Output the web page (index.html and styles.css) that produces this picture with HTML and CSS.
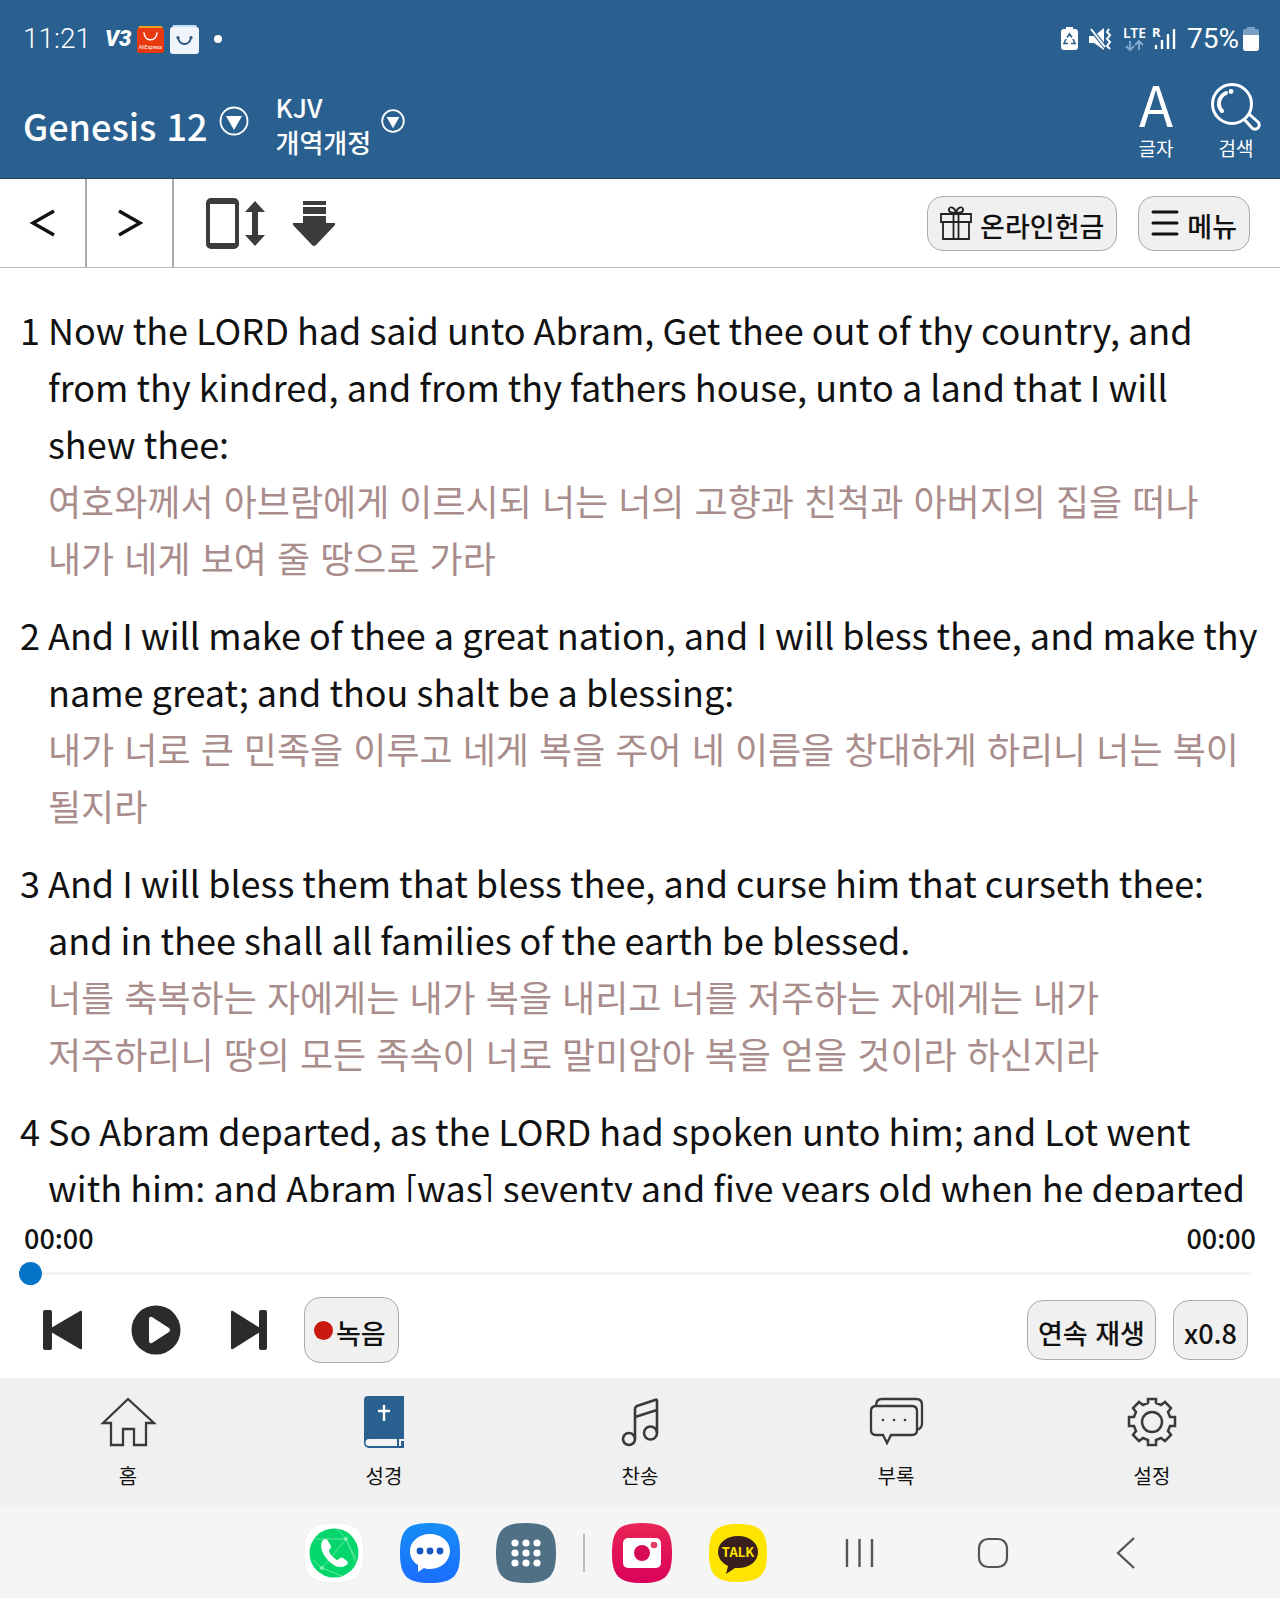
FILE: index.html
```html
<!DOCTYPE html>
<html lang="ko">
<head>
<meta charset="utf-8">
<meta name="viewport" content="width=device-width, initial-scale=1">
<title>Genesis 12</title>
<link rel="stylesheet" href="styles.css">
</head>
<body>
<div class="app">
  <header class="top">
    <div class="status">
      <div class="status-left">
        <span class="clock">11:21</span>
        <span class="v3">V3</span>
        <svg width="27" height="27" viewBox="0 0 27 27"><path d="M2 0h23l1 4H1z" fill="#f5a01c"/><rect y="2" width="27" height="25" rx="2" fill="#e8380d"/><path d="M7 7c1 9 12 9 13 0" fill="none" stroke="#fff" stroke-width="1.6" stroke-linecap="round"/><text x="13.500" y="22.500" font-size="5" text-anchor="middle" fill="#fff">AliExpress</text></svg>
        <svg width="29" height="29" viewBox="0 0 29 29"><path d="M3 0h23l2 5H1z" fill="#c4dcf5"/><rect y="2" width="29" height="27" rx="3" fill="#eff5fb"/><path d="M8 13c2 8 11 8 13 0" fill="none" stroke="#2a5580" stroke-width="1.800"/><circle cx="8" cy="12.500" r="1.600" fill="#2a5580"/><circle cx="21" cy="12.500" r="1.600" fill="#2a5580"/></svg>
        <span class="dot"></span>
      </div>
      <div class="status-right">
        <svg width="17" height="24" viewBox="0 0 17 24"><path d="M5 0h7v2h2a3 3 0 0 1 3 3v15a3 3 0 0 1-3 3H3a3 3 0 0 1-3-3V5a3 3 0 0 1 3-3h2z" fill="#fff"/><path d="M6 10.500l2.500-3.500 2.500 3.500M12 12l2 4.500h-4M7 16.500H3L5 12" fill="none" stroke="#2a6090" stroke-width="1.600"/></svg>
        <svg width="23" height="24" viewBox="0 0 23 24"><path d="M0 9h5l10-8v22L5 16H0z" fill="#fff"/><path d="M1 1l16 20" stroke="#2a6090" stroke-width="4"/><path d="M2 2l14 18" stroke="#fff" stroke-width="2"/><path d="M20 2l-2 3 3 3-3 4 3 3-3 4 3 3" fill="none" stroke="#fff" stroke-width="2"/></svg>
        <svg width="24" height="24" viewBox="0 0 24 24"><text x="0" y="11" font-size="14" font-weight="600" fill="#fff" class="net">LTE</text><path d="M7 14v9M3 19l4 4 4-4M16 23v-9M12 18l4-4 4 4" fill="none" stroke="#85abd0" stroke-width="1.800"/></svg>
        <svg class="signal" width="24" height="24" viewBox="0 0 24 24"><text x="0" y="10" font-size="13" font-weight="700" fill="#fff" class="net">R</text><path d="M4 18v4M10 13v9M16 7v15M22 2v20" stroke="#fff" stroke-width="2.400"/></svg>
        <span class="battery-text">75%</span>
        <svg width="16" height="24" viewBox="0 0 16 24"><path d="M4 0h8v2h2a2 2 0 0 1 2 2v17a3 3 0 0 1-3 3H3a3 3 0 0 1-3-3V4a2 2 0 0 1 2-2h2z" fill="#7aa0c4"/><path d="M0 8h16v13a3 3 0 0 1-3 3H3a3 3 0 0 1-3-3z" fill="#fff"/></svg>
      </div>
    </div>
    <div class="titlebar">
      <button class="book"><span>Genesis 12</span><svg width="30" height="30" viewBox="0 0 30 30"><circle cx="15" cy="15" r="13.500" fill="none" stroke="#fff" stroke-width="1.800"/><path d="M7 10h16l-8 14z" fill="#fff"/></svg></button>
      <button class="version"><span>KJV<br>개역개정</span><svg width="24" height="24" viewBox="0 0 30 30"><circle cx="15" cy="15" r="13.500" fill="none" stroke="#fff" stroke-width="2.200"/><path d="M7 10h16l-8 14z" fill="#fff"/></svg></button>
      <div class="tools">
        <button class="tool"><span class="tool-glyph">A</span><span>글자</span></button>
        <button class="tool"><svg width="50" height="48" viewBox="0 0 50 48"><g fill="none" stroke="#fff"><circle cx="21" cy="21" r="19.500" stroke-width="3"/><path d="M33 36l8 9a4 4 0 0 0 6-6l-9-8" stroke-width="3"/><path d="M15 10c-8 4-9 13-4 18" stroke-width="4" stroke-linecap="round"/></g><circle cx="20" cy="8.500" r="2.400" fill="#fff"/></svg><span>검색</span></button>
      </div>
    </div>
  </header>

  <nav class="toolbar">
    <button class="step" aria-label="이전 장"><svg width="24" height="28" viewBox="0 0 24 28"><path d="M23 2L2 14l21 12" fill="none" stroke="#111" stroke-width="3.400"/></svg></button>
    <button class="step" aria-label="다음 장"><svg width="24" height="28" viewBox="0 0 24 28"><path d="M1 2l21 12L1 26" fill="none" stroke="#111" stroke-width="3.400"/></svg></button>
    <button class="plain" aria-label="자동 스크롤"><svg width="59" height="51" viewBox="0 0 59 51"><path d="M5 0h23a5 5 0 0 1 5 5v41a5 5 0 0 1-5 5H5a5 5 0 0 1-5-5V5a5 5 0 0 1 5-5zM4 6v39h25V6z" fill="#3c3c3c" fill-rule="evenodd"/><path d="M49 3l10 11h-7v23h7L49 48 39 37h7V14h-7z" fill="#3c3c3c"/></svg></button>
    <button class="plain" aria-label="다운로드"><svg width="42" height="45" viewBox="0 0 42 45"><path d="M10 0h23v4H10zM10 6h23v7H10zM10 15h23v7h9v2L23 44q-2 2-4 0L0 24v-2h10z" fill="#3c3c3c"/></svg></button>
    <span class="spacer"></span>
    <button class="pill"><svg width="32" height="34" viewBox="0 0 32 34"><g fill="none" stroke="#222" stroke-width="1.800"><path d="M1 8h30v8H1zM3 16h26v17H3zM13.500 8v25M18.500 8v25M16 7c-4 0-8-1-7-4s6-2 7 4c1-6 6-7 7-4s-3 4-7 4z"/></g></svg><span>온라인헌금</span></button>
    <button class="pill"><svg width="28" height="26" viewBox="0 0 28 26"><path d="M2 2h24M2 13h24M2 24h24" stroke="#111" stroke-width="3" stroke-linecap="round"/></svg><span>메뉴</span></button>
  </nav>

  <main class="reader">
    <article class="verse"><span class="num">1</span><div><p lang="en">Now the LORD had said unto Abram, Get thee out of thy country, and from thy kindred, and from thy fathers house, unto a land that I will shew thee:</p><p class="ko">여호와께서 아브람에게 이르시되 너는 너의 고향과 친척과 아버지의 집을 떠나 내가 네게 보여 줄 땅으로 가라</p></div></article>
    <article class="verse"><span class="num">2</span><div><p lang="en">And I will make of thee a great nation, and I will bless thee, and make thy name great; and thou shalt be a blessing:</p><p class="ko">내가 너로 큰 민족을 이루고 네게 복을 주어 네 이름을 창대하게 하리니 너는 복이 될지라</p></div></article>
    <article class="verse"><span class="num">3</span><div><p lang="en">And I will bless them that bless thee, and curse him that curseth thee: and in thee shall all families of the earth be blessed.</p><p class="ko">너를 축복하는 자에게는 내가 복을 내리고 너를 저주하는 자에게는 내가 저주하리니 땅의 모든 족속이 너로 말미암아 복을 얻을 것이라 하신지라</p></div></article>
    <article class="verse"><span class="num">4</span><div><p lang="en">So Abram departed, as the LORD had spoken unto him; and Lot went with him: and Abram [was] seventy and five years old when he departed</p></div></article>
  </main>

  <section class="player">
    <div class="times" lang="en"><span>00:00</span><span>00:00</span></div>
    <input class="seek" type="range" min="0" max="100" value="0" aria-label="재생 위치">
    <div class="controls">
      <button class="plain" aria-label="이전"><svg width="39" height="40" viewBox="0 0 39 40"><rect width="9" height="40" rx="2" fill="#2b2b2b"/><path d="M8 18L37 1q2-1 2 1v36q0 2-2 1L8 22z" fill="#2b2b2b"/></svg></button>
      <button class="plain" aria-label="재생"><svg width="50" height="50" viewBox="0 0 50 50"><circle cx="25" cy="25" r="24.500" fill="#2b2b2b"/><path d="M18 14q0-3 3-2l17 11q2 2 0 4L21 38q-3 1-3-2z" fill="#fff"/></svg></button>
      <button class="plain" aria-label="다음"><svg width="39" height="40" viewBox="0 0 39 40"><rect x="29" width="8" height="40" rx="2" fill="#2b2b2b"/><path d="M30 18L3 1Q1 0 1 2v36q0 2 2 1l27-17z" fill="#2b2b2b"/></svg></button>
      <button class="pill record"><i class="rec-dot"></i><span>녹음</span></button>
      <span class="spacer"></span>
      <button class="pill small">연속 재생</button>
      <button class="pill small">x0.8</button>
    </div>
  </section>

  <nav class="tabs">
    <a href="#home"><svg width="56" height="52" viewBox="0 0 56 52"><path d="M28 3L3 27h8v22h12V33h11v16h12V27h8z" fill="none" stroke="#3a3a3a" stroke-width="2.300"/></svg><span>홈</span></a>
    <a href="#bible"><svg width="56" height="52" viewBox="0 0 56 52"><path d="M12 0h36v52H13a5 5 0 0 1-5-5V4a4 4 0 0 1 4-4z" fill="#2a6090"/><path d="M48 43H13a3.500 3.500 0 0 0 0 7h28v-7h2v7h2v-5h3z" fill="#f2f2f2"/><path d="M28 9v16M22 15h12" stroke="#fff" stroke-width="2.400"/></svg><span>성경</span></a>
    <a href="#hymn"><svg width="56" height="52" viewBox="0 0 56 52"><g fill="none" stroke="#3a3a3a" stroke-width="2.600"><circle cx="17" cy="43" r="6"/><circle cx="38.500" cy="37" r="6.500"/><path d="M23 43V13q0-2 2-3l18-6q2-1 2 1v32M23 21l22-7"/></g></svg><span>찬송</span></a>
    <a href="#appendix"><svg width="56" height="52" viewBox="0 0 56 52"><g fill="none" stroke="#3a3a3a" stroke-width="2.300"><path d="M8 10h36q5 0 5 5v19q0 5-5 5H23l-4 8-4-8H8q-5 0-5-5V15q0-5 5-5z"/><path d="M8 10q0-7 6-7h34q6 0 6 6v19q0 4-5 6"/></g><g fill="#3a3a3a"><circle cx="15" cy="24" r="1.300"/><circle cx="26" cy="24" r="1.300"/><circle cx="37" cy="24" r="1.300"/></g></svg><span>부록</span></a>
    <a href="#settings"><svg width="56" height="52" viewBox="0 0 56 52"><g fill="none" stroke="#3a3a3a" stroke-width="2.500"><circle cx="28" cy="26" r="10"/><path d="M24 3h8v4l5 2 4-3 6 6-3 4 2 5h5v9h-5l-2 5 3 4-6 6-4-3-5 2v5h-8v-5l-5-2-4 3-6-6 3-4-2-5H5v-9h5l2-5-3-4 6-6 4 3 5-2z"/></g></svg><span>설정</span></a>
  </nav>

  <nav class="dock">
    <div class="dock-apps">
      <button class="plain" aria-label="전화"><svg width="60" height="60" viewBox="0 0 60 60"><path d="M30 0C53 0 60 7 60 30S53 60 30 60 0 53 0 30 7 0 30 0z" fill="#fff" stroke="#eee"/><circle cx="30" cy="30" r="24.500" fill="#05d66c"/><path d="M12 16l30 0L18 45M42 16l10 20M42 16L33 6M18 45l20 8M18 45L9 37M42 16L52 40" stroke="#63e7a0" fill="none"/><circle cx="42" cy="16" r="2" fill="#83efb5"/><circle cx="18" cy="45" r="2" fill="#83efb5"/><path d="M19 17c2-2 4-1 5 1l3 5c1 2-2 3-2 5 1 4 5 7 8 9 2 0 3-4 6-2l4 3c2 2 0 4-2 5-6 3-13-1-18-7-5-6-8-14-4-19z" fill="#fff"/></svg></button>
      <button class="plain" aria-label="메시지"><svg width="60" height="60" viewBox="0 0 60 60"><defs><linearGradient id="msg" x2="0" y2="1"><stop stop-color="#168df5"/><stop offset="1" stop-color="#1b6dff"/></linearGradient></defs><path d="M30 0C53 0 60 7 60 30S53 60 30 60 0 53 0 30 7 0 30 0z" fill="url(#msg)"/><path d="M30 11c12 0 20 8 20 17s-8 18-20 18c-2 0-4 0-6-1l-6 4v-7c-5-3-8-8-8-14 0-9 8-17 20-17z" fill="#fff"/><g fill="#1558c0"><circle cx="20" cy="28" r="3.400"/><circle cx="30" cy="28" r="3.400"/><circle cx="40" cy="28" r="3.400"/></g></svg></button>
      <button class="plain" aria-label="앱스"><svg width="60" height="60" viewBox="0 0 60 60"><path d="M30 0C53 0 60 7 60 30S53 60 30 60 0 53 0 30 7 0 30 0z" fill="#507086"/><g fill="#fff"><circle cx="19" cy="20" r="3.600"/><circle cx="30" cy="20" r="3.600"/><circle cx="41" cy="20" r="3.600"/><circle cx="19" cy="30" r="3.600"/><circle cx="30" cy="30" r="3.600"/><circle cx="41" cy="30" r="3.600"/><circle cx="19" cy="40" r="3.600"/><circle cx="30" cy="40" r="3.600"/><circle cx="41" cy="40" r="3.600"/></g></svg></button>
    </div>
    <span class="dock-line"></span>
    <div class="dock-apps">
      <button class="plain" aria-label="카메라"><svg width="60" height="60" viewBox="0 0 60 60"><defs><linearGradient id="cam" x2="0" y2="1"><stop stop-color="#e82655"/><stop offset="1" stop-color="#d9005b"/></linearGradient></defs><path d="M30 0C53 0 60 7 60 30S53 60 30 60 0 53 0 30 7 0 30 0z" fill="url(#cam)"/><rect x="11" y="15" width="38" height="30" rx="5" fill="#fff"/><circle cx="30" cy="30" r="8" fill="#d60a55"/><circle cx="42" cy="22" r="3.300" fill="#e03a66"/></svg></button>
      <button class="plain" aria-label="카카오톡"><svg width="60" height="60" viewBox="0 0 60 60"><path d="M30 1C52 1 59 8 59 30S52 59 30 59 1 52 1 30 8 1 30 1z" fill="#fee500"/><path d="M30 13c12 0 20 7 20 16s-8 16-20 16h-3l-9 6 2-8c-6-3-10-8-10-14 0-9 8-16 20-16z" fill="#3b1e1e"/><text x="30" y="34" font-size="13" font-weight="700" text-anchor="middle" fill="#fee500">TALK</text></svg></button>
    </div>
    <div class="keys">
      <button class="plain" aria-label="최근 앱"><svg width="32" height="32" viewBox="0 0 32 32"><path d="M3 2v28M15.500 2v28M28 2v28" stroke="#555" stroke-width="2.400"/></svg></button>
      <button class="plain" aria-label="홈 화면"><svg width="32" height="32" viewBox="0 0 32 32"><rect x="2" y="2" width="28" height="28" rx="9" fill="none" stroke="#555" stroke-width="2.200"/></svg></button>
      <button class="plain" aria-label="뒤로"><svg width="32" height="32" viewBox="0 0 32 32"><path d="M24 1L8 16l16 15" fill="none" stroke="#555" stroke-width="2.300"/></svg></button>
    </div>
  </nav>
</div>
</body>
</html>
```
FILE: styles.css
```css
* { box-sizing: border-box; }
body, p { margin: 0; }
body {
  font-family: "Noto Sans CJK KR", sans-serif;
  font-variant-ligatures: no-contextual;
  color: #111;
  background: #fff;
}
button {
  margin: 0;
  padding: 0;
  border: 0;
  background: none;
  color: inherit;
  font: inherit;
  cursor: pointer;
}
svg { display: block; flex: none; overflow: visible; }
.net { font-family: "Noto Sans", sans-serif; }
.spacer { flex: 1; }

.app {
  display: flex;
  flex-direction: column;
  height: 100vh;
}
.app > * { flex: none; }

/* Header */
.top {
  background: #2a6090;
  color: #fff;
  border-bottom: 1px solid #24415c;
}
.status {
  display: flex;
  justify-content: space-between;
  height: 78px;
  padding: 0 21px 0 23px;
  font: 400 28px/32px Roboto, sans-serif;
}
.status-left, .status-right { display: flex; align-items: center; }
.status-left { gap: 6px; }
.status-right { gap: 11px; }
.clock { padding-right: 8px; font-weight: 300; }
.v3 { font-size: 22px; font-weight: 900; font-style: italic; }
.dot { width: 8px; height: 8px; margin-left: 9px; border-radius: 50%; background: #fff; }
.signal { margin-left: -6px; }
.battery-text { margin-right: -7px; }
.titlebar {
  display: flex;
  align-items: flex-start;
  height: 100px;
  padding: 0 19px 0 23px;
}
.book, .version { display: flex; font-weight: 500; text-align: left; }
.book { gap: 11px; font-size: 36px; line-height: 94px; }
.book svg { margin-top: 28px; }
.version { gap: 10px; margin: 11px 0 0 27px; font-size: 26px; line-height: 35px; }
.version svg { margin-top: 20px; }
.tools { display: flex; gap: 30px; margin-left: auto; }
.tool {
  display: flex;
  flex-direction: column;
  align-items: center;
  width: 50px;
  padding-top: 4px;
  font-size: 19px;
  line-height: 32px;
}
.tool svg, .tool-glyph { height: 50px; }
.tool-glyph { font-size: 56px; line-height: 42px; }

/* Toolbar */
.toolbar {
  display: flex;
  align-items: center;
  height: 89px;
  padding-right: 30px;
  border-bottom: 1px solid #bbb;
}
.step {
  display: flex;
  align-items: center;
  justify-content: center;
  width: 87px;
  height: 100%;
  border-right: 2px solid #aaa;
}
.plain { display: flex; }
.step + .plain { margin-left: 32px; }
.toolbar .plain + .plain { margin-left: 28px; }
.pill {
  display: flex;
  align-items: center;
  justify-content: center;
  gap: 8px;
  height: 55px;
  padding: 0 12px;
  border: 1px solid #aaa;
  border-radius: 16px;
  background: #f0f0f0;
  color: #111;
  font-size: 27px;
  font-weight: 500;
  line-height: 32px;
  white-space: nowrap;
}
.pill span { padding-top: 5px; }
.toolbar .pill + .pill { margin-left: 21px; }

/* Verses */
.app > .reader {
  flex: 1 1 0;
  min-height: 0;
  overflow: hidden auto;
  scrollbar-width: none;
  padding: 33px 20px 0;
  font-size: 36px;
  line-height: 57px;
}
.verse { display: flex; margin-bottom: 20px; }
.verse > div { flex: 1; }
.num { width: 28px; }
.ko { color: #a98c8c; word-break: keep-all; }

/* Player */
.player { padding: 15px 24px 15px; }
.times {
  display: flex;
  justify-content: space-between;
  font-size: 27px;
  font-weight: 500;
  line-height: 42px;
}
.seek {
  display: block;
  appearance: none;
  width: 100%;
  height: 24px;
  margin: 2px -5px 12px;
  background: linear-gradient(#f3f3f3, #f3f3f3) center / 100% 3px no-repeat;
}
.seek::-webkit-slider-thumb {
  appearance: none;
  width: 23px;
  height: 23px;
  border-radius: 50%;
  background: #0675c9;
}
.controls {
  display: flex;
  align-items: center;
  height: 66px;
  padding: 0 8px 0 19px;
}
.controls .plain { margin-right: 49px; }
.controls .plain:nth-child(3) { margin-right: 35px; }
.pill.record { gap: 3px; height: 66px; padding: 0 12px 0 9px; }
.rec-dot { width: 19px; height: 19px; border-radius: 50%; background: #c91a12; }
.small { height: 60px; padding: 5px 10px 0; }
.small + .small { margin-left: 17px; }

/* Tabs */
.tabs {
  display: grid;
  grid-template-columns: repeat(5, 1fr);
  height: 129px;
  padding-top: 18px;
  background: #f0f0f0;
}
.tabs a {
  display: flex;
  flex-direction: column;
  align-items: center;
  gap: 11px;
  color: #111;
  font-size: 20px;
  line-height: 34px;
  text-decoration: none;
}

/* System dock */
.dock {
  display: flex;
  align-items: center;
  height: 91px;
  padding-left: calc(50% - 336px);
  background: #f5f5f5;
}
.dock-apps { display: flex; gap: 36px; }
.dock-line { width: 2px; height: 38px; margin: 0 27px; background: #bbb; }
.keys { display: flex; gap: 101px; margin-left: 76px; }
```
